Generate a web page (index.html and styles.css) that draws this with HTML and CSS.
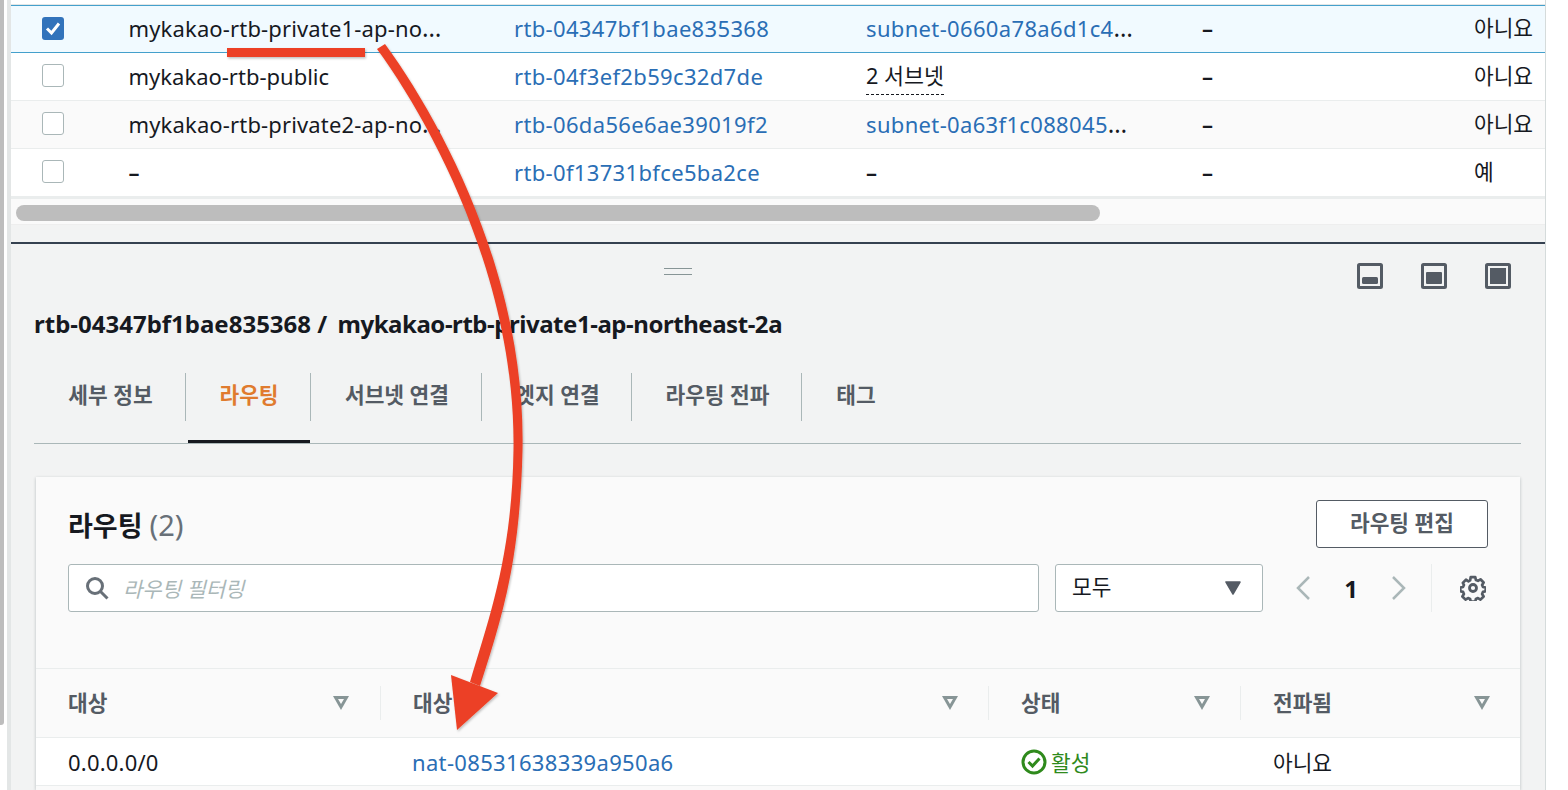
FILE: index.html
```html
<!DOCTYPE html>
<html lang="ko">
<head>
<meta charset="utf-8">
<title>라우팅 테이블</title>
<link rel="stylesheet" href="styles.css">
</head>
<body>
<div class="rail"></div>
<main class="main">
  <section class="top">
    <div class="row row-sel">
      <div class="cb cb-on"><svg viewBox="0 0 22 23" width="22" height="23"><path d="M5 11.5l4.5 4.5L17 6.5" fill="none" stroke="#fff" stroke-width="3"/></svg></div>
      <div class="nm">mykakao-rtb-private1-ap-no<span class="ell">…</span></div>
      <div class="lnk">rtb-04347bf1bae835368</div>
      <div><span class="lnk">subnet-0660a78a6d1c4</span><span class="ell">…</span></div>
      <div class="nil">–</div>
      <div class="kr">아니요</div>
    </div>
    <div class="row">
      <div class="cb"></div>
      <div>mykakao-rtb-public</div>
      <div class="lnk">rtb-04f3ef2b59c32d7de</div>
      <div><span class="dash">2 서브넷</span></div>
      <div class="nil">–</div>
      <div class="kr">아니요</div>
    </div>
    <div class="row row-alt">
      <div class="cb"></div>
      <div class="nm">mykakao-rtb-private2-ap-no<span class="ell">…</span></div>
      <div class="lnk">rtb-06da56e6ae39019f2</div>
      <div><span class="lnk">subnet-0a63f1c088045</span><span class="ell">…</span></div>
      <div class="nil">–</div>
      <div class="kr">아니요</div>
    </div>
    <div class="row row-last">
      <div class="cb"></div>
      <div class="nil">–</div>
      <div class="lnk">rtb-0f13731bfce5ba2ce</div>
      <div class="nil">–</div>
      <div class="nil">–</div>
      <div class="kr">예</div>
    </div>
    <div class="track"><div class="thumb"></div></div>
  </section>
  <section class="panel">
    <div class="handle-row">
      <div class="handle"></div>
      <div class="views">
        <svg class="view" viewBox="0 0 26 26"><rect x="1.5" y="1.5" width="23" height="23" rx="1" fill="none" stroke="#545b64" stroke-width="3"/><rect x="5" y="14" width="16" height="7" rx="1.5" fill="#545b64"/></svg>
        <svg class="view" viewBox="0 0 26 26"><rect x="1.5" y="1.5" width="23" height="23" rx="1" fill="none" stroke="#545b64" stroke-width="3"/><rect x="5" y="9" width="16" height="12" rx="1" fill="#545b64"/></svg>
        <svg class="view" viewBox="0 0 26 26"><rect x="1.5" y="1.5" width="23" height="23" rx="1" fill="none" stroke="#545b64" stroke-width="3"/><rect x="5" y="5" width="16" height="16" fill="#545b64"/></svg>
      </div>
    </div>
    <h2 class="title">rtb-04347bf1bae835368 / <span class="title-name">mykakao-rtb-private1-ap-northeast-2a</span></h2>
    <nav class="tabs">
      <div class="tab t1">세부 정보</div>
      <div class="tab t2 on">라우팅</div>
      <div class="tab t3">서브넷 연결</div>
      <div class="tab t4">엣지 연결</div>
      <div class="tab t5">라우팅 전파</div>
      <div class="tab t6">태그</div>
    </nav>
    <div class="card">
      <div class="card-head">
        <h3 class="card-title">라우팅 <span class="count">(2)</span></h3>
        <div class="btn">라우팅 편집</div>
      </div>
      <div class="tools">
        <div class="filter">
          <svg class="mag" viewBox="0 0 24 24" width="24" height="24"><circle cx="10" cy="10" r="7.5" fill="none" stroke="#687078" stroke-width="3"/><path d="M15.5 15.5l7 7" stroke="#687078" stroke-width="3" fill="none"/></svg>
          <span class="ph">라우팅 필터링</span>
        </div>
        <div class="select"><span class="kr sel-txt">모두</span><svg viewBox="0 0 16 14" width="16" height="14"><path d="M1 1h14L8 13z" fill="#545b64" stroke="#545b64" stroke-width="1.5" stroke-linejoin="round"/></svg></div>
        <div class="pager">
          <svg viewBox="0 0 16 26" width="16" height="26"><path d="M14 2L3 13l11 11" fill="none" stroke="#aab7b8" stroke-width="2.5"/></svg>
          <b class="page">1</b>
          <svg viewBox="0 0 16 26" width="16" height="26"><path d="M2 2l11 11L2 24" fill="none" stroke="#aab7b8" stroke-width="2.5"/></svg>
        </div>
        <div class="gear-box">
          <svg viewBox="0 0 26 26" width="26" height="26"><path d="M10.5 1.5h5l.7 3.2 2.3 1 2.8-1.7 3.5 3.500-1.700 2.800 1 2.300 3 .7v4l-3 .7-1 2.300 1.700 2.800-3.500 3.500-2.800-1.700-2.300 1-.7 3h-5l-.7-3-2.300-1-2.800 1.700-3.500-3.500 1.700-2.800-1-2.300-3-.7v-4l3-.7 1-2.300L1.700 8 5.200 4.500 8 6.200l1.800-1z" transform="translate(1.300 .7) scale(.9)" fill="none" stroke="#545b64" stroke-width="3" stroke-linejoin="round"/><circle cx="13" cy="13" r="3.500" fill="none" stroke="#545b64" stroke-width="2.800"/></svg>
        </div>
      </div>
      <div class="thead">
        <div class="th c1">대상<i class="sort"></i></div>
        <div class="th c2">대상<i class="sort"></i></div>
        <div class="th c3">상태<i class="sort"></i></div>
        <div class="th c4">전파됨<i class="sort"></i></div>
      </div>
      <div class="trow">
        <div class="td c1 ip">0.0.0.0/0</div>
        <div class="td c2 lnk">nat-08531638339a950a6</div>
        <div class="td c3 ok"><svg viewBox="0 0 26 26" width="26" height="26"><circle cx="13" cy="13" r="11" fill="none" stroke="#2f8a1c" stroke-width="3"/><path d="M7.500 13l4 4 7-7.500" fill="none" stroke="#2f8a1c" stroke-width="3"/></svg>활성</div>
        <div class="td c4 kr">아니요</div>
      </div>
    </div>
  </section>
</main>
<svg class="anno" viewBox="0 0 1568 790" width="1568" height="790">
  <defs><filter id="sh" x="-10%" y="-10%" width="120%" height="120%"><feDropShadow dx="1" dy="1.500" stdDeviation="1" flood-color="#000" flood-opacity=".25"/></filter></defs>
  <g filter="url(#sh)" fill="#ec4125">
    <rect x="227" y="48" width="138" height="9"/>
    <path d="M377 49L385 44C444 125 526 280 522.500 450C520 555 505 610 480 686L470 682C490 615 512 555 513.500 450C516 285 436 130 377 49Z"/>
    <path d="M451 675L498 693L457 730Z"/>
  </g>
</svg>
</body>
</html>
```
FILE: styles.css
```css
* { box-sizing: border-box; }
html, body { margin: 0; padding: 0; }
body {
  width: 1568px; height: 790px; overflow: hidden; background: #fff; display: flex; align-items: flex-start;
  font-family: "Noto Sans", "Noto Sans CJK KR", sans-serif; font-size: 22px; color: #16191f; position: relative;
}
.rail { width: 4px; height: 725px; background: #bdbdbd; border-radius: 0 0 3px 0; flex: none; margin-right: 3px; }
.main { width: 1539px; height: 790px; flex: none; background: #f2f3f3; border-left: 4px solid #e3e6e6; border-right: 1px solid #d5dbdb; display: flex; flex-direction: column; overflow: hidden; }
.top { padding-top: 4px; background: #fff; flex: none; }
.row {
  display: grid; grid-template-columns: 117.500px 385.500px 352px 336px 272px 1fr; height: 48px; align-items: center;
  border-bottom: 1px solid #eaeded; line-height: 30px; white-space: nowrap; padding-bottom: 2px;
}
.row-sel { margin-top: 1px; background: #f1faff; border-top: 1px solid #44a0cc; border-bottom: 1px solid #44a0cc; box-shadow: 0 -1px 0 #e3e6e6; }
.row-alt { background: #fafafa; }
.row-last { border-bottom: none; height: 47px; }
.cb { width: 22px; height: 23px; margin-left: 31px; border: 1.500px solid #aab7b8; border-radius: 3px; background: #fff; }
.row > .cb { justify-self: start; }
.cb-on { background: #3273bb; border: none; }
.cb-on svg { display: block; }
.lnk { color: #2a6eb5; letter-spacing: .34px; }
.nm { letter-spacing: .15px; }
.ell { font-size: 24.5px; line-height: 22px; }
.nil { font-weight: 600; }
.kr { font-size: 21.4px; }
.dash { border-bottom: 1.500px dashed #16191f; display: inline-block; line-height: 30px; padding-bottom: 3px; margin-top: 4px; font-size: 21.7px; }
.track { height: 29px; background: #fafafa; border-top: 3px solid #eaeded; border-bottom: 1px solid #eee; padding: 6px 0 0 5px; }
.thumb { width: 1084px; height: 16px; border-radius: 8px; background: #bdbdbd; }
.panel { flex: 1; background: #f2f3f3; margin-top: 17px; position: relative; border-top: 2px solid #354150; min-height: 0; display: flex; flex-direction: column; }
.handle-row { height: 63px; display: flex; position: relative; flex: none; }
.handle { width: 28px; height: 7px; margin: 24px 0 0 653px; border-top: 1.500px solid #879596; border-bottom: 1.500px solid #879596; }
.views { position: absolute; right: 34px; top: 19px; display: flex; gap: 38px; }
.view { width: 26px; height: 26px; display: block; }
.title { margin: 0; padding-left: 23px; font-size: 24px; font-weight: 700; line-height: 34px; flex: none; height: 34px; }
.title-name { letter-spacing: -.46px; margin-left: 4px; }
.tabs { margin: 30px 24px 0 23px; height: 73px; display: flex; border-bottom: 1.500px solid #aab7b8; flex: none; align-items: flex-start; padding-top: 2px; position: relative; font-size: 21.4px; font-weight: 700; color: #545b64; }
.tab { height: 48px; line-height: 44px; text-align: center; flex: none; border-right: 1.500px solid #aab7b8; padding-left: 2px; }
.t1 { width: 152px; } .t2 { width: 125px; } .t3 { width: 171px; } .t4 { width: 150px; } .t5 { width: 170px; } .t6 { width: 106px; border-right: none; }
.tab.on { color: #e07b2e; position: relative; }
.tab.on::after { content: ""; position: absolute; left: 2px; right: 0; top: 67px; height: 3px; background: #16191f; }
.card { margin: 33px 0 0 25px; width: 1484px; flex: 1; background: #fafafa; box-shadow: 0 1px 3px rgba(0,28,36,.25); }
.card-head { height: 87px; display: flex; justify-content: space-between; padding: 23px 32px 0 32px; }
.card-title { margin: 0; font-size: 27px; font-weight: 700; line-height: 50px; }
.count { font-weight: 400; color: #687078; font-size: 29px; }
.btn { width: 172px; height: 48px; border: 1.500px solid #545b64; border-radius: 3px; background: #fff; color: #545b64; font-weight: 700; font-size: 21.4px; text-align: center; line-height: 44px; }
.tools { display: flex; height: 48px; padding-left: 32px; align-items: stretch; }
.filter { width: 971px; border: 1.500px solid #aab7b8; border-radius: 3px; background: #fff; display: flex; align-items: center; padding-left: 16px; gap: 14px; }
.ph { font-style: italic; color: #aab7b8; font-size: 21px; }
.select { width: 208px; margin-left: 16px; border: 1.500px solid #aab7b8; border-radius: 3px; background: #fff; display: flex; align-items: center; justify-content: space-between; padding: 0 21px 0 16px; }
.sel-txt { margin-bottom: 5px; }
.pager { width: 168px; display: flex; align-items: center; justify-content: space-between; padding: 0 24px 0 32px; }
.page { font-size: 24px; }
.gear-box { border-left: 1px solid #eaeded; padding-left: 28px; display: flex; align-items: center; }
.thead { margin-top: 56px; height: 70px; border-top: 1.500px solid #eaeded; border-bottom: 1.500px solid #eaeded; display: flex; align-items: center; color: #545b64; font-weight: 700; font-size: 21.4px; }
.th { position: relative; height: 34px; line-height: 34px; padding-left: 32px; }
.sort { position: absolute; top: 10px; width: 16px; height: 14px; background: #879596; clip-path: polygon(0 0,100% 0,50% 100%); }
.sort::after { content: ""; position: absolute; left: 5px; top: 3px; width: 6px; height: 5px; background: #fafafa; clip-path: polygon(0 0,100% 0,50% 100%); }
.c1 { width: 344px; } .c2 { width: 608px; border-left: 1px solid #eaeded; } .c3 { width: 252px; border-left: 1px solid #eaeded; } .c4 { width: 280px; border-left: 1px solid #eaeded; }
.th.c1 .sort { left: 297px; }
.th.c2 .sort { left: 561px; } .th.c3 .sort { left: 205px; } .th.c4 .sort { left: 233px; }
.trow { height: 48px; background: #fff; border-bottom: 1.500px solid #eaeded; display: flex; align-items: center; }
.td { padding-left: 32px; border-left: 1px solid transparent; }
.td.c1 { border-left: 0; }
.td.c2 { padding-left: 31px; }
.ip { letter-spacing: .2px; }
.ok { color: #2f8a1c; display: flex; align-items: center; gap: 4px; font-size: 21.4px; }
.anno { position: absolute; left: 0; top: 0; pointer-events: none; }
```
